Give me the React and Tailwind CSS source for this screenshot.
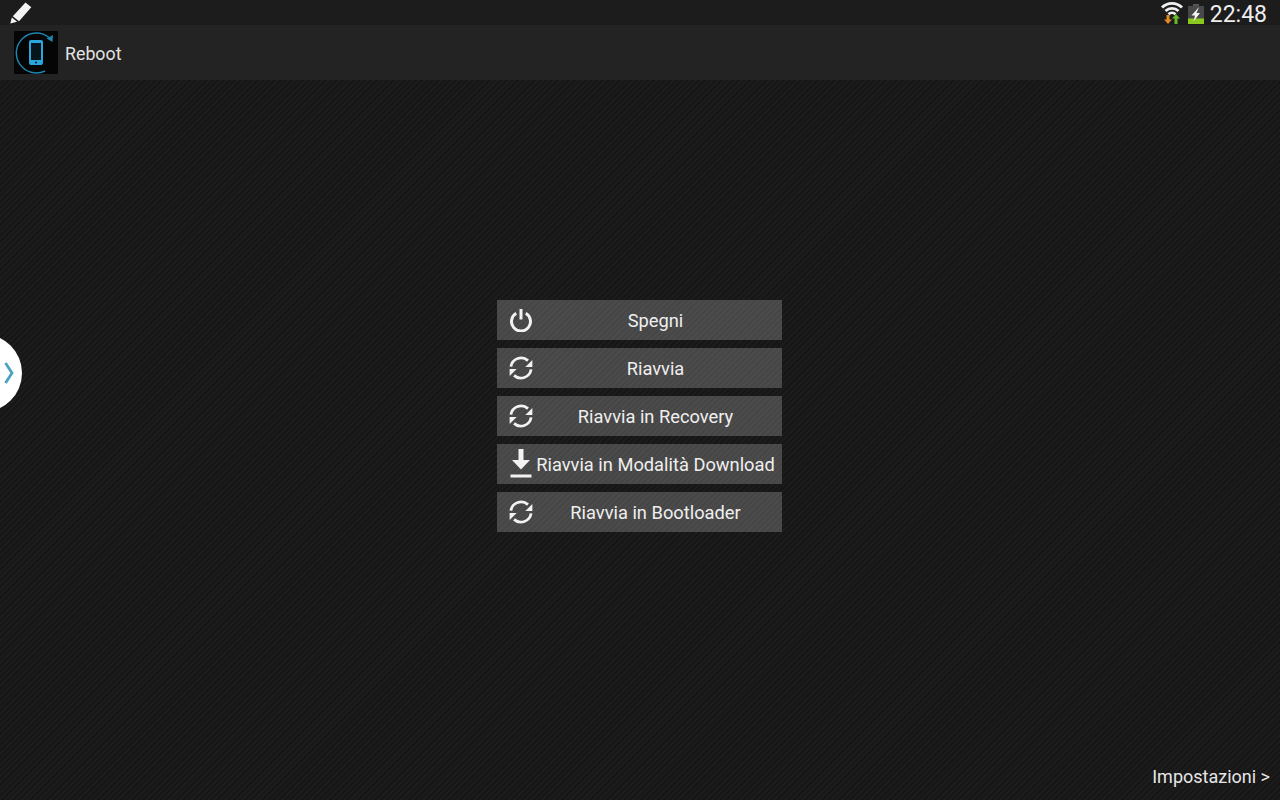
const stripes = 'bg-[repeating-linear-gradient(135deg,#1c1c1c_0px,#1c1c1c_2px,#161616_2px,#161616_4px)]'

function PowerIcon() {
  return (
    <svg width="24" height="24" viewBox="0 0 24 24" fill="none" stroke="#f2f2f2" strokeWidth="3">
      <path d="M7.200 5.300a9.500 9.500 0 1 0 9.600 0" />
      <path d="M12 1v10.500" />
    </svg>
  )
}

function SyncIcon() {
  return (
    <svg width="24" height="24" viewBox="0 0 24 24" fill="none">
      <path d="M1.900 10.600A10.300 10.300 0 0 1 19 4.600" stroke="#f2f2f2" strokeWidth="2.800" />
      <path d="M22.100 13.400A10.300 10.300 0 0 1 5 19.400" stroke="#f2f2f2" strokeWidth="2.800" />
      <path d="M23.400 4v7h-7z" fill="#f2f2f2" />
      <path d="M.6 20v-7h7z" fill="#f2f2f2" />
    </svg>
  )
}

function DownloadIcon() {
  return (
    <svg width="24" height="32" viewBox="0 0 24 32" fill="#f2f2f2">
      <path d="M9.500 1h5v11h6.500L12 21.500 3 12h6.500z" />
      <rect x="1.500" y="26.500" width="21" height="3" />
    </svg>
  )
}

function PenIcon() {
  return (
    <svg width="24" height="22" viewBox="0 0 24 22" fill="#f4f4f4">
      <path d="M16.500 0.500l5.800 4.800-12.300 14-6.200-5z" />
      <path d="M2.800 15.500l5.300 4.300-6.800 1.700z" />
    </svg>
  )
}

function WifiIcon() {
  return (
    <svg width="24" height="23" viewBox="0 0 24 23" fill="none">
      <path d="M2 6.500a14 14 0 0 1 20 0" stroke="#efefef" strokeWidth="2.800" />
      <path d="M5.500 10a9.500 9.500 0 0 1 13 0" stroke="#efefef" strokeWidth="2.800" />
      <path d="M8.500 13.300a5 5 0 0 1 7 0" stroke="#efefef" strokeWidth="2.800" />
      <path d="M6.500 14h3v4.500H12L8 23l-4-4.500h2.500z" fill="#e28a24" />
      <path d="M16 13l4 4.500h-2.500V23h-3v-5.500H12z" fill="#68b82c" />
    </svg>
  )
}

function BatteryIcon() {
  return (
    <svg width="16" height="20" viewBox="0 0 16 20">
      <rect x="5" y="0" width="6" height="2" fill="#555555" />
      <rect x="0" y="2" width="16" height="18" fill="#484848" />
      <rect x="0" y="14.500" width="16" height="5.500" fill="#8cc71e" />
      <path d="M11 3L3.500 11.500h3.500l-1.500 6 6.500-8.500H8.500z" fill="#f4f4f4" />
    </svg>
  )
}

function AppLogo() {
  return (
    <div className="w-[44px] h-[43px] bg-[#050505] flex items-center justify-center">
      <svg width="44" height="43" viewBox="0 0 44 43" fill="none">
        <path d="M35 6.500A20 20 0 1 0 31 40" stroke="#1c87b0" strokeWidth="1.400" />
        <path d="M39 4l-.5 7-6-3.500z" fill="#1c87b0" />
        <rect x="15" y="9" width="14" height="25" rx="2" fill="#2ba6dc" />
        <rect x="17" y="12" width="10" height="17" fill="#06141b" />
        <circle cx="22" cy="31.500" r="1" fill="#06141b" />
      </svg>
    </div>
  )
}

function RebootButton({ icon, label }) {
  return (
    <button className="w-[285px] h-[40px] flex items-center pl-3 text-[18.300px] leading-none text-[#efefef] bg-[repeating-linear-gradient(135deg,#4b4b4b_0px,#4b4b4b_2px,#464646_2px,#464646_4px)]">
      <span className="w-6 shrink-0 flex justify-center">{icon}</span>
      <span className="flex-1 -ml-[4px] pt-[3px] text-center whitespace-nowrap">{label}</span>
    </button>
  )
}

export default function App() {
  return (
    <div className={`relative w-[1280px] h-[800px] overflow-hidden flex flex-col font-['Roboto',sans-serif] ${stripes}`}>
      <div className="h-[25px] shrink-0 bg-[#1c1c1c] flex items-center justify-between pl-[9px] pr-[13px]">
        <PenIcon />
        <div className="flex items-center">
          <WifiIcon />
          <span className="ml-[4px] mt-[3px]"><BatteryIcon /></span>
          <span className="ml-[6px] pt-[3px] text-[23px] leading-none text-[#eeeeee]">22:48</span>
        </div>
      </div>
      <div className="h-[55px] shrink-0 bg-[#232323] flex items-center pl-[14px]">
        <AppLogo />
        <span className="ml-[7px] pt-[2px] text-[17.800px] leading-none text-[#e2e2e2]">Reboot</span>
      </div>
      <div className="flex-1 flex flex-col items-center justify-center gap-2 pr-px">
        <RebootButton icon={<PowerIcon />} label="Spegni" />
        <RebootButton icon={<SyncIcon />} label="Riavvia" />
        <RebootButton icon={<SyncIcon />} label="Riavvia in Recovery" />
        <RebootButton icon={<DownloadIcon />} label="Riavvia in Modalità Download" />
        <RebootButton icon={<SyncIcon />} label="Riavvia in Bootloader" />
      </div>
      <div className="h-[48px] shrink-0 flex items-center justify-end pr-[10px] text-[18px] text-[#e6e6e6]">
        Impostazioni &gt;
      </div>
      <div className="absolute left-[-56px] top-[334px] w-[78px] h-[78px] rounded-full bg-white flex items-center justify-end pr-[7px]">
        <svg width="12" height="24" viewBox="0 0 12 24" fill="none">
          <path d="M2.500 2l6.500 10-6.500 10" stroke="#4aa3c4" strokeWidth="2.800" />
        </svg>
      </div>
    </div>
  )
}
